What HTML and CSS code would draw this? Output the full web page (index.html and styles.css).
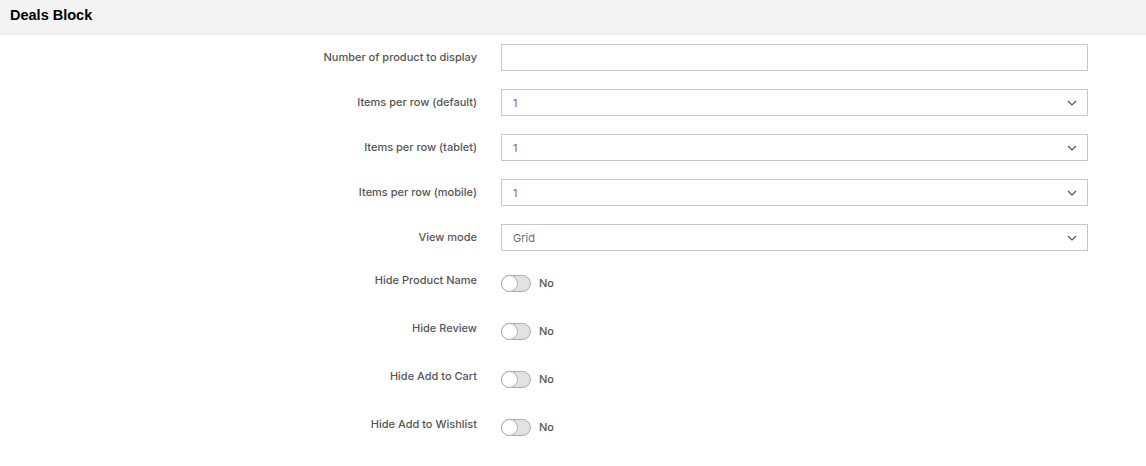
FILE: index.html
```html
<!DOCTYPE html>
<html>
<head>
<meta charset="utf-8">
<link rel="stylesheet" href="styles.css">
</head>
<body>
<div class="header"><span class="title">Deals Block</span></div>
<div class="form">
  <div class="row">
    <label class="lbl">Number of product to display</label>
    <div class="field"><div class="input"></div></div>
  </div>
  <div class="row">
    <label class="lbl">Items per row (default)</label>
    <div class="field"><div class="input select"><span class="val">1</span><svg class="chev" width="10" height="6" viewBox="0 0 10 6"><path d="M1 1 L5 5 L9 1" fill="none" stroke="#555" stroke-width="1.2"/></svg></div></div>
  </div>
  <div class="row">
    <label class="lbl">Items per row (tablet)</label>
    <div class="field"><div class="input select"><span class="val">1</span><svg class="chev" width="10" height="6" viewBox="0 0 10 6"><path d="M1 1 L5 5 L9 1" fill="none" stroke="#555" stroke-width="1.2"/></svg></div></div>
  </div>
  <div class="row">
    <label class="lbl">Items per row (mobile)</label>
    <div class="field"><div class="input select"><span class="val">1</span><svg class="chev" width="10" height="6" viewBox="0 0 10 6"><path d="M1 1 L5 5 L9 1" fill="none" stroke="#555" stroke-width="1.2"/></svg></div></div>
  </div>
  <div class="row last-input">
    <label class="lbl">View mode</label>
    <div class="field"><div class="input select"><span class="val">Grid</span><svg class="chev" width="10" height="6" viewBox="0 0 10 6"><path d="M1 1 L5 5 L9 1" fill="none" stroke="#555" stroke-width="1.2"/></svg></div></div>
  </div>
  <div class="row trow">
    <label class="lbl">Hide Product Name</label>
    <div class="field tfield"><span class="toggle"><span class="knob"></span></span><span class="no">No</span></div>
  </div>
  <div class="row trow">
    <label class="lbl">Hide Review</label>
    <div class="field tfield"><span class="toggle"><span class="knob"></span></span><span class="no">No</span></div>
  </div>
  <div class="row trow">
    <label class="lbl">Hide Add to Cart</label>
    <div class="field tfield"><span class="toggle"><span class="knob"></span></span><span class="no">No</span></div>
  </div>
  <div class="row trow">
    <label class="lbl">Hide Add to Wishlist</label>
    <div class="field tfield"><span class="toggle"><span class="knob"></span></span><span class="no">No</span></div>
  </div>
</div>
</body>
</html>
```
FILE: styles.css
```css
html, body {
  margin: 0;
  padding: 0;
  background: #fff;
}
body {
  width: 1146px;
  height: 466px;
  overflow: hidden;
  font-family: Inter, "Open Sans", sans-serif;
}
.header {
  height: 35px;
  background: #f3f3f3;
  border-bottom: 1px solid #e6e6e6;
  box-sizing: border-box;
  display: flex;
  align-items: center;
  padding-left: 10px;
}
.title {
  font-family: "Liberation Sans", Arial, sans-serif;
  font-weight: bold;
  font-size: 14.5px;
  color: #000;
  margin-top: -5px;
}
.form {
  padding-top: 9px;
}
.row {
  display: grid;
  grid-template-columns: 477px 587px;
  column-gap: 24px;
  height: 27px;
  margin-bottom: 18px;
  align-items: center;
}
.row.last-input {
  margin-bottom: 20px;
}
.lbl {
  text-align: right;
  font-size: 11px;
  font-weight: 500;
  color: #555;
  margin-top: -2px;
}
.input {
  height: 27px;
  box-sizing: border-box;
  border: 1px solid #c8c8c8;
  background: #fff;
  display: flex;
  align-items: center;
  padding-left: 11px;
  padding-right: 8px;
}
.select {
  justify-content: space-between;
}
.val {
  font-size: 11px;
  color: #7a6a5c;
}
.chev {
  margin-right: 2px;
}
.row.trow {
  height: 24px;
  margin-bottom: 24px;
  align-items: start;
}
.trow .lbl {
  line-height: 18px;
  margin-top: 0;
}
.tfield {
  display: flex;
  align-items: center;
  height: 24px;
}
.toggle {
  width: 30px;
  height: 17px;
  box-sizing: border-box;
  border: 1px solid #a9a9a9;
  border-radius: 9px;
  background: #e2e2e2;
  position: relative;
  display: inline-block;
}
.knob {
  position: absolute;
  left: -1px;
  top: -1px;
  width: 17px;
  height: 17px;
  box-sizing: border-box;
  border: 1px solid #a9a9a9;
  border-radius: 50%;
  background: #fff;
}
.no {
  margin-left: 8px;
  font-size: 11px;
  font-weight: 500;
  color: #555;
}
```
